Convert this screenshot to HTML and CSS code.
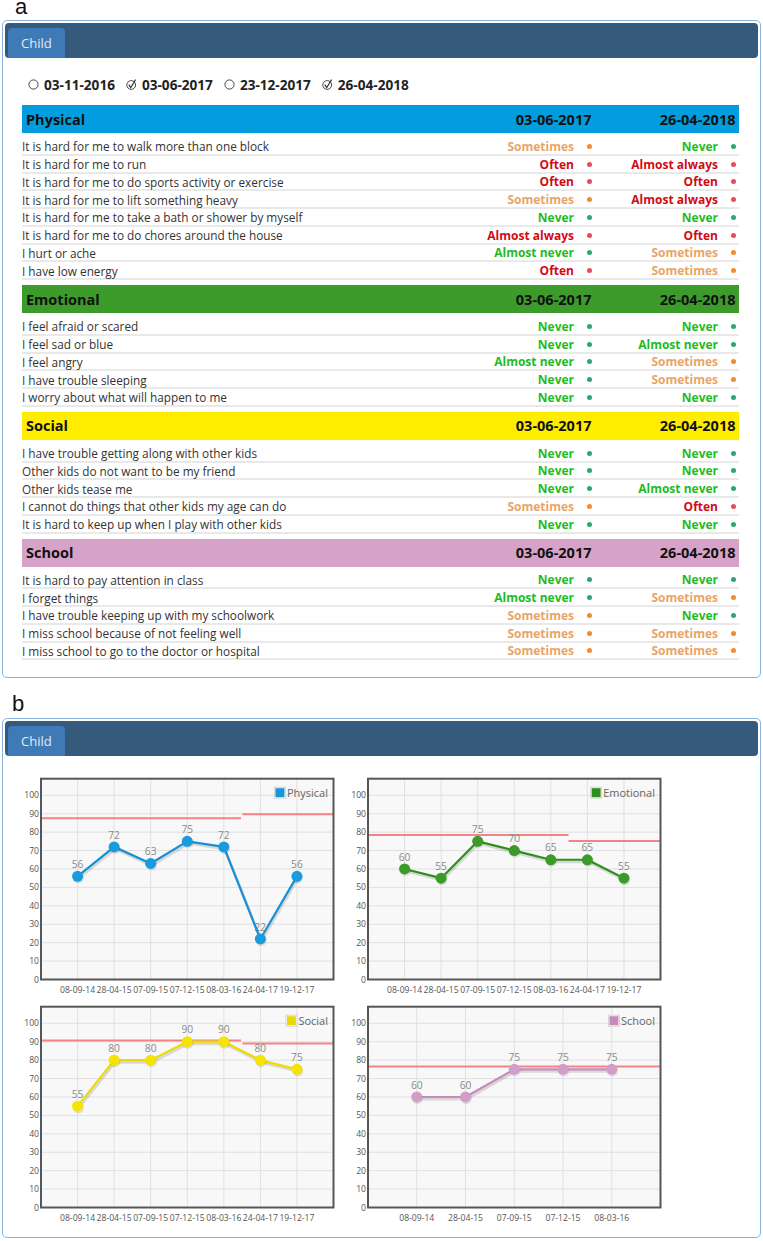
FILE: index.html
```html
<!DOCTYPE html>
<html lang="en">
<head>
<meta charset="utf-8">
<title>Child questionnaire</title>
<link rel="stylesheet" href="styles.css">
</head>
<body>
<div class="fig-label fig-a">a</div>
<section class="panel">
  <div class="panel-head"><div class="tab">Child</div></div>
  <div class="sheet">
    <div class="dates">
      <span class="opt"><svg class="ico" viewBox="0 0 11 11"><circle cx="5.5" cy="5.5" r="4.6" fill="#fff" stroke="#333" stroke-width="0.9"/></svg>03-11-2016</span>
      <span class="opt"><svg class="ico" viewBox="0 0 11 11"><circle cx="5.2" cy="6" r="4.4" fill="none" stroke="#333" stroke-width="0.9"/><path d="M2.8 5.6 L4.7 8.6 L9.6 0.6" fill="none" stroke="#333" stroke-width="1.1"/></svg>03-06-2017</span>
      <span class="opt"><svg class="ico" viewBox="0 0 11 11"><circle cx="5.5" cy="5.5" r="4.6" fill="#fff" stroke="#333" stroke-width="0.9"/></svg>23-12-2017</span>
      <span class="opt"><svg class="ico" viewBox="0 0 11 11"><circle cx="5.2" cy="6" r="4.4" fill="none" stroke="#333" stroke-width="0.9"/><path d="M2.8 5.6 L4.7 8.6 L9.6 0.6" fill="none" stroke="#333" stroke-width="1.1"/></svg>26-04-2018</span>
    </div>

    <div class="sec">
      <div class="sec-head physical"><span class="title">Physical</span><span class="col">03-06-2017</span><span class="col">26-04-2018</span></div>
      <div class="rows">
        <div class="row"><span class="q">It is hard for me to walk more than one block</span><span class="col"><b class="v some">Sometimes</b><i class="dot o"></i></span><span class="col"><b class="v good">Never</b><i class="dot g"></i></span></div>
        <div class="row"><span class="q">It is hard for me to run</span><span class="col"><b class="v bad">Often</b><i class="dot r"></i></span><span class="col"><b class="v bad">Almost always</b><i class="dot r"></i></span></div>
        <div class="row"><span class="q">It is hard for me to do sports activity or exercise</span><span class="col"><b class="v bad">Often</b><i class="dot r"></i></span><span class="col"><b class="v bad">Often</b><i class="dot r"></i></span></div>
        <div class="row"><span class="q">It is hard for me to lift something heavy</span><span class="col"><b class="v some">Sometimes</b><i class="dot o"></i></span><span class="col"><b class="v bad">Almost always</b><i class="dot r"></i></span></div>
        <div class="row"><span class="q">It is hard for me to take a bath or shower by myself</span><span class="col"><b class="v good">Never</b><i class="dot g"></i></span><span class="col"><b class="v good">Never</b><i class="dot g"></i></span></div>
        <div class="row"><span class="q">It is hard for me to do chores around the house</span><span class="col"><b class="v bad">Almost always</b><i class="dot r"></i></span><span class="col"><b class="v bad">Often</b><i class="dot r"></i></span></div>
        <div class="row"><span class="q">I hurt or ache</span><span class="col"><b class="v good">Almost never</b><i class="dot g"></i></span><span class="col"><b class="v some">Sometimes</b><i class="dot o"></i></span></div>
        <div class="row"><span class="q">I have low energy</span><span class="col"><b class="v bad">Often</b><i class="dot r"></i></span><span class="col"><b class="v some">Sometimes</b><i class="dot o"></i></span></div>
      </div>
    </div>

    <div class="sec">
      <div class="sec-head emotional"><span class="title">Emotional</span><span class="col">03-06-2017</span><span class="col">26-04-2018</span></div>
      <div class="rows">
        <div class="row"><span class="q">I feel afraid or scared</span><span class="col"><b class="v good">Never</b><i class="dot g"></i></span><span class="col"><b class="v good">Never</b><i class="dot g"></i></span></div>
        <div class="row"><span class="q">I feel sad or blue</span><span class="col"><b class="v good">Never</b><i class="dot g"></i></span><span class="col"><b class="v good">Almost never</b><i class="dot g"></i></span></div>
        <div class="row"><span class="q">I feel angry</span><span class="col"><b class="v good">Almost never</b><i class="dot g"></i></span><span class="col"><b class="v some">Sometimes</b><i class="dot o"></i></span></div>
        <div class="row"><span class="q">I have trouble sleeping</span><span class="col"><b class="v good">Never</b><i class="dot g"></i></span><span class="col"><b class="v some">Sometimes</b><i class="dot o"></i></span></div>
        <div class="row"><span class="q">I worry about what will happen to me</span><span class="col"><b class="v good">Never</b><i class="dot g"></i></span><span class="col"><b class="v good">Never</b><i class="dot g"></i></span></div>
      </div>
    </div>

    <div class="sec">
      <div class="sec-head social"><span class="title">Social</span><span class="col">03-06-2017</span><span class="col">26-04-2018</span></div>
      <div class="rows">
        <div class="row"><span class="q">I have trouble getting along with other kids</span><span class="col"><b class="v good">Never</b><i class="dot g"></i></span><span class="col"><b class="v good">Never</b><i class="dot g"></i></span></div>
        <div class="row"><span class="q">Other kids do not want to be my friend</span><span class="col"><b class="v good">Never</b><i class="dot g"></i></span><span class="col"><b class="v good">Never</b><i class="dot g"></i></span></div>
        <div class="row"><span class="q">Other kids tease me</span><span class="col"><b class="v good">Never</b><i class="dot g"></i></span><span class="col"><b class="v good">Almost never</b><i class="dot g"></i></span></div>
        <div class="row"><span class="q">I cannot do things that other kids my age can do</span><span class="col"><b class="v some">Sometimes</b><i class="dot o"></i></span><span class="col"><b class="v bad">Often</b><i class="dot r"></i></span></div>
        <div class="row"><span class="q">It is hard to keep up when I play with other kids</span><span class="col"><b class="v good">Never</b><i class="dot g"></i></span><span class="col"><b class="v good">Never</b><i class="dot g"></i></span></div>
      </div>
    </div>

    <div class="sec">
      <div class="sec-head school"><span class="title">School</span><span class="col">03-06-2017</span><span class="col">26-04-2018</span></div>
      <div class="rows">
        <div class="row"><span class="q">It is hard to pay attention in class</span><span class="col"><b class="v good">Never</b><i class="dot g"></i></span><span class="col"><b class="v good">Never</b><i class="dot g"></i></span></div>
        <div class="row"><span class="q">I forget things</span><span class="col"><b class="v good">Almost never</b><i class="dot g"></i></span><span class="col"><b class="v some">Sometimes</b><i class="dot o"></i></span></div>
        <div class="row"><span class="q">I have trouble keeping up with my schoolwork</span><span class="col"><b class="v some">Sometimes</b><i class="dot o"></i></span><span class="col"><b class="v good">Never</b><i class="dot g"></i></span></div>
        <div class="row"><span class="q">I miss school because of not feeling well</span><span class="col"><b class="v some">Sometimes</b><i class="dot o"></i></span><span class="col"><b class="v some">Sometimes</b><i class="dot o"></i></span></div>
        <div class="row"><span class="q">I miss school to go to the doctor or hospital</span><span class="col"><b class="v some">Sometimes</b><i class="dot o"></i></span><span class="col"><b class="v some">Sometimes</b><i class="dot o"></i></span></div>
      </div>
    </div>
  </div>
</section>

<div class="fig-label fig-b">b</div>
<section class="panel">
  <div class="panel-head"><div class="tab">Child</div></div>
  <div class="charts">
    <div class="chart" data-i="0"></div>
    <div class="chart" data-i="1"></div>
    <div class="chart" data-i="2"></div>
    <div class="chart" data-i="3"></div>
  </div>
</section>
<script src="script.js"></script>
</body>
</html>
```

FILE: styles.css
```css
* { box-sizing: border-box; }
body {
  margin: 0;
  width: 763px;
  background: #fff;
  color: #333;
  font-family: "Open Sans", "Noto Sans", sans-serif;
}
.fig-label {
  font-family: "Liberation Sans", Arial, sans-serif;
  font-size: 22px;
  line-height: 12px;
  color: #111;
}
.fig-a { height: 20px; padding: 1px 0 0 15px; line-height: 11px; }
.fig-b { height: 40px; padding: 20px 0 0 12px; }

.panel {
  width: 759px;
  margin-left: 2px;
  border: 1px solid #8bb2db;
  border-radius: 5px;
  padding: 2px;
}
.panel-head {
  height: 35px;
  padding: 5px 0 0 3px;
  background: #365a7c;
  border-radius: 4px;
}
.tab {
  display: inline-block;
  height: 30px;
  line-height: 30px;
  padding: 0 13px;
  background: #3e7ab5;
  color: #e2eaf3;
  font-size: 13px;
  border-radius: 4px 4px 0 0;
}

.sheet { padding: 17px 19px 10px 17px; }

.dates {
  display: flex;
  align-items: center;
  gap: 11px;
  height: 18px;
  padding-left: 6px;
  margin-bottom: 12px;
  font-size: 13.6px;
  font-weight: 700;
  color: #222;
}
.opt { display: flex; align-items: center; gap: 5px; }
.ico { width: 11px; height: 11px; display: block; }

.sec-head {
  display: flex;
  align-items: center;
  height: 28px;
  font-size: 14.5px;
  font-weight: 700;
  color: #111;
}
.sec-head .title { flex: 1; padding-left: 4px; }
.physical { background: #019ddf; }
.emotional { background: #3d9b2c; }
.social { background: #ffed00; }
.school { background: #d7a2c8; }

.rows { margin: 5px 0; }
.row {
  display: flex;
  align-items: center;
  height: 17.75px;
  padding-top: 1px;
  border-bottom: 2px solid #e9e9e9;
  font-size: 11.8px;
  color: #333;
}
.row .q { flex: 1; }
.col {
  width: 144px;
  display: flex;
  align-items: center;
  justify-content: flex-end;
  padding-right: 3.5px;
}
.row .col { font-size: 12px; }
.v { font-weight: 700; }
.good { color: #1ebc1e; }
.bad { color: #d20a14; }
.some { color: #e9a468; }
.dot {
  width: 5px;
  height: 5px;
  border-radius: 50%;
  margin-left: 12.5px;
}
.dot.g { background: #2aa96b; }
.dot.r { background: #e94a5e; }
.dot.o { background: #f58a2b; }

.charts {
  display: grid;
  grid-template-columns: 327px 327px;
  grid-auto-rows: 227.5px;
  margin: 14px 0 10px 2px;
}
.chart svg { display: block; overflow: visible; }
.chart .ax { font-family: "Open Sans", sans-serif; font-size: 8.6px; fill: #555; }
.chart .vl { font-family: "Open Sans", sans-serif; font-size: 10.2px; fill: #8a8a8a; }
.chart .lg { font-family: "Open Sans", sans-serif; font-size: 11px; fill: #666; }
```

FILE: script.js
```js
(function () {
  var NS = 'http://www.w3.org/2000/svg';
  function el(tag, attrs, parent) {
    var e = document.createElementNS(NS, tag);
    for (var k in attrs) e.setAttribute(k, attrs[k]);
    if (parent) parent.appendChild(e);
    return e;
  }
  var L7 = ['08-09-14', '28-04-15', '07-09-15', '07-12-15', '08-03-16', '24-04-17', '19-12-17'];
  var charts = [
    { name: 'Physical', line: '#1690d4', fill: '#1a9bdd', legend: '#1996d8', labels: L7,
      values: [56, 72, 63, 75, 72, 22, 56], ref: [[0, 200, 87.5], [201.5, 292.5, 89.7]] },
    { name: 'Emotional', line: '#2f8f1d', fill: '#3b9b27', legend: '#2f8f1d', labels: L7,
      values: [60, 55, 75, 70, 65, 65, 55], ref: [[0, 200.5, 78.4], [200.5, 292.5, 75.2]] },
    { name: 'Social', line: '#eedb00', fill: '#f7e300', legend: '#ecd900', labels: L7,
      values: [55, 80, 80, 90, 90, 80, 75], ref: [[0, 200, 90.6], [201.5, 292.5, 89]] },
    { name: 'School', line: '#c98abb', fill: '#d49dc7', legend: '#c98abb',
      labels: ['08-09-14', '28-04-15', '07-09-15', '07-12-15', '08-03-16'],
      values: [60, 60, 75, 75, 75], ref: [[0, 292.5, 76.6]] }
  ];
  var X0 = 34, X1 = 326.5, Y0 = 8.7, Y1 = 209.5, S = 1.842;
  var hosts = document.querySelectorAll('.chart');
  for (var h = 0; h < hosts.length; h++) {
    var c = charts[h];
    var svg = el('svg', { width: 327, height: 228, viewBox: '0 0 327 228' }, hosts[h]);
    el('rect', { x: X0, y: Y0, width: X1 - X0, height: Y1 - Y0, fill: '#f8f8f8' }, svg);
    for (var v = 0; v <= 100; v += 10) {
      var y = Y1 - v * S;
      if (v > 0) el('line', { x1: X0, x2: X1, y1: y, y2: y, stroke: '#e0e0e0', 'stroke-width': 1 }, svg);
      var t = el('text', { x: 32, y: y + 3, 'text-anchor': 'end', 'class': 'ax' }, svg);
      t.textContent = v;
    }
    var n = c.values.length, step = (X1 - X0) / (n + 1), xs = [], ys = [];
    for (var i = 0; i < n; i++) {
      xs.push(X0 + (i + 1) * step);
      ys.push(Y1 - c.values[i] * S);
    }
    for (i = 0; i < n; i++) {
      el('line', { x1: xs[i], x2: xs[i], y1: Y0, y2: Y1, stroke: '#e0e0e0', 'stroke-width': 1 }, svg);
      var xl = el('text', { x: xs[i], y: Y1 + 13.8, 'text-anchor': 'middle', 'class': 'ax' }, svg);
      xl.textContent = c.labels[i];
    }
    c.ref.forEach(function (r) {
      var yy = Y1 - r[2] * S;
      el('line', { x1: X0 + r[0], x2: X0 + r[1], y1: yy, y2: yy, stroke: '#f58383', 'stroke-width': 2 }, svg);
    });
    for (i = 0; i < n; i++) {
      var vl = el('text', { x: xs[i], y: ys[i] - 8.3, 'text-anchor': 'middle', 'class': 'vl' }, svg);
      vl.textContent = c.values[i];
    }
    var pts = xs.map(function (x, k) { return x + ',' + ys[k]; }).join(' ');
    el('polyline', { points: pts, fill: 'none', stroke: 'rgba(0,0,0,0.13)', 'stroke-width': 3, transform: 'translate(1,2)' }, svg);
    el('polyline', { points: pts, fill: 'none', stroke: c.line, 'stroke-width': 2.2, 'stroke-linejoin': 'round' }, svg);
    for (i = 0; i < n; i++) {
      el('circle', { cx: xs[i] + 0.8, cy: ys[i] + 1.5, r: 5.6, fill: 'rgba(0,0,0,0.1)' }, svg);
      el('circle', { cx: xs[i], cy: ys[i], r: 5.5, fill: c.fill }, svg);
    }
    el('rect', { x: X0, y: Y0, width: X1 - X0, height: Y1 - Y0, fill: 'none', stroke: '#565656', 'stroke-width': 2 }, svg);
    var lt = el('text', { x: X1 - 5.5, y: Y0 + 17.8, 'text-anchor': 'end', 'class': 'lg' }, svg);
    lt.textContent = c.name;
    var w = lt.getComputedTextLength();
    el('rect', { x: X1 - 5.5 - w - 12.5, y: Y0 + 8.5, width: 11, height: 11, fill: '#fff', stroke: '#d4d4d4', 'stroke-width': 1 }, svg);
    el('rect', { x: X1 - 5.5 - w - 11.5, y: Y0 + 9.5, width: 9, height: 9, fill: c.legend }, svg);
  }
})();
```
